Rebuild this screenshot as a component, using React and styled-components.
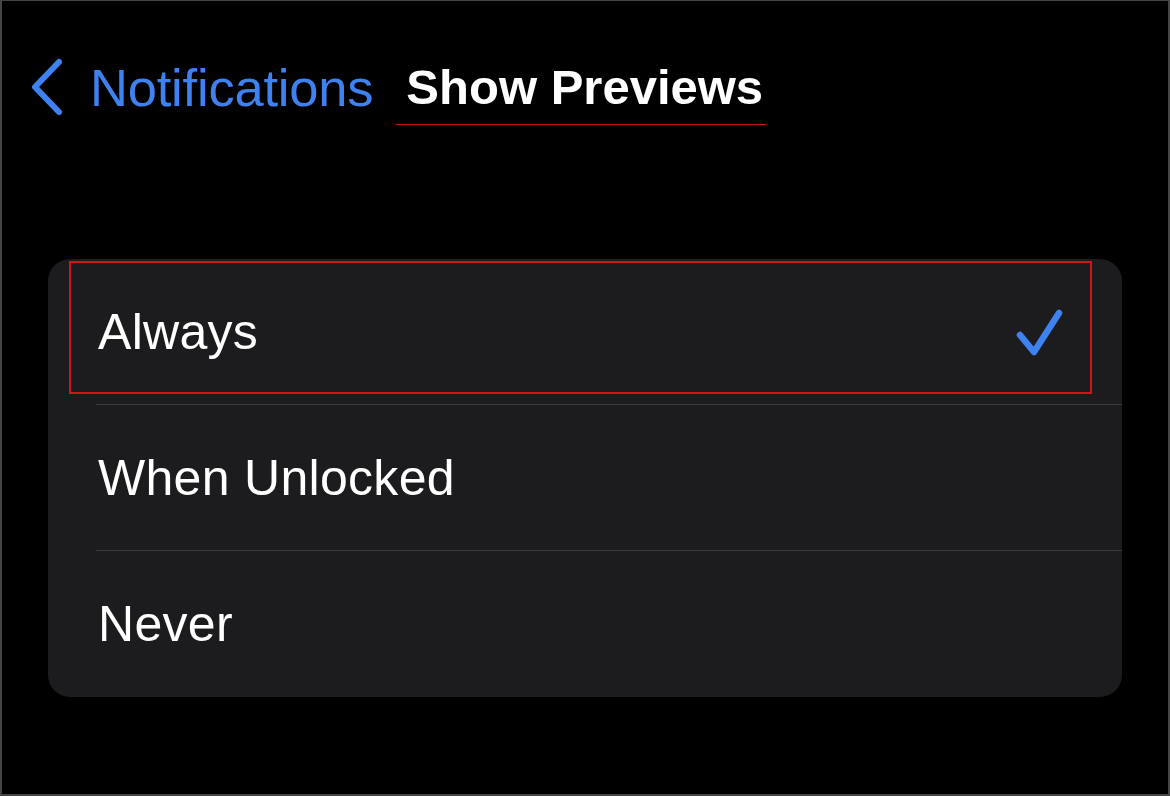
import React from "react";
import styled, { createGlobalStyle } from "styled-components";

const GlobalStyle = createGlobalStyle`
    html, body{
        margin: 0;
        padding: 0;
        background: #000;
    }
    body{
        font-family: "Liberation Sans", Arial, sans-serif;
        -webkit-font-smoothing: antialiased;
    }
`;

const options = ["Always", "When Unlocked", "Never"];

const App = () => {
    const selected = "Always";

    return (
        <Frame>
            <GlobalStyle />
            <NavBar>
                <BackButton type="button">
                    <svg width="34" height="58" viewBox="0 0 34 58" fill="none">
                        <path d="M29 4 L5 29 L29 54" stroke="#3d82f0" strokeWidth="6" strokeLinecap="round" strokeLinejoin="round" />
                    </svg>
                    <span>Notifications</span>
                </BackButton>
                <Title>Show Previews</Title>
            </NavBar>

            <Card>
                {options.map((option, index) => (
                    <Row key={option} $last={index === options.length - 1}>
                        <Label>{option}</Label>
                        {selected === option && (
                            <>
                                <svg width="50" height="50" viewBox="0 0 50 50" fill="none">
                                    <path d="M6 28 L20 45 L45 6" stroke="#3d82f0" strokeWidth="6.5" strokeLinecap="round" strokeLinejoin="round" />
                                </svg>
                                <Highlight />
                            </>
                        )}
                    </Row>
                ))}
            </Card>
        </Frame>
    );
};

export default App;

const Frame = styled.div`
    width: 1170px;
    height: 796px;
    box-sizing: border-box;
    border: 2px solid #454545;
    border-top-width: 1px;
    background: #000;
    overflow: hidden;
`;

const NavBar = styled.div`
    display: flex;
    align-items: center;
    gap: 33px;
    margin-top: 57px;
    padding-left: 28px;
    height: 58px;
`;

const BackButton = styled.button`
    display: flex;
    align-items: center;
    gap: 26px;
    background: transparent;
    border: 0;
    padding: 0;
    cursor: pointer;
    color: #3d82f0;
    font-family: "Liberation Sans", Arial, sans-serif;
    font-size: 52.5px;
    letter-spacing: -0.2px;
`;

const Title = styled.h1`
    position: relative;
    margin: 0;
    color: #fff;
    font-size: 49px;
    font-weight: 700;
    letter-spacing: 0;

    &::after{
        content: "";
        position: absolute;
        left: -10px;
        right: -3px;
        bottom: -10px;
        height: 1.5px;
        background: #c4161c;
    }
`;

const Card = styled.div`
    margin: 143px 0 0 46px;
    width: 1074px;
    background: #1c1c1e;
    border-radius: 22px;
    overflow: hidden;
`;

const Row = styled.div`
    position: relative;
    display: flex;
    align-items: center;
    justify-content: space-between;
    height: 146px;
    padding: 0 58px 0 50px;
    box-sizing: border-box;

    &::after{
        content: "";
        display: ${(props) => (props.$last ? "none" : "block")};
        position: absolute;
        left: 48px;
        right: 0;
        bottom: 0;
        height: 1px;
        background: #3a3a3f;
    }
`;

const Label = styled.span`
    color: #fff;
    font-size: 50px;
    letter-spacing: 0.3px;
`;

const Highlight = styled.div`
    position: absolute;
    left: 21px;
    top: 2px;
    width: 1023px;
    height: 133px;
    box-sizing: border-box;
    border: 2px solid #d0141a;
    pointer-events: none;
`;
